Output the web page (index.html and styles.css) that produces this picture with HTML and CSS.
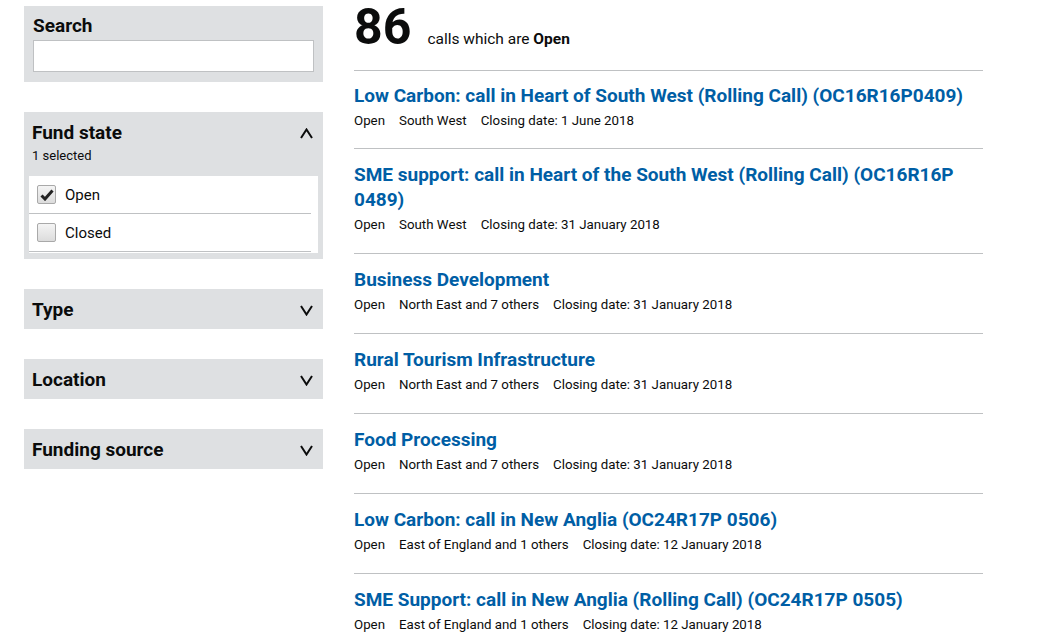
FILE: index.html
```html
<!DOCTYPE html>
<html lang="en">
<head>
  <meta charset="UTF-8" />
  <title>Funding calls</title>
  <link rel="stylesheet" href="styles.css">
</head>
<body>
  <div class="page">
    <aside class="filters">
      <div class="panel search">
        <label for="q" class="panel-title">Search</label>
        <input type="text" id="q" />
      </div>

      <div class="panel facet open">
        <div class="facet-head">
          <div>
            <div class="panel-title">Fund state</div>
            <div class="facet-count">1 selected</div>
          </div>
          <span class="caret">
            <svg width="13" height="11" viewBox="0 0 13 11"><path d="M1 10 L6.5 1.5 L12 10" fill="none" stroke="#0b0c0c" stroke-width="2"/></svg>
          </span>
        </div>
        <div class="options">
          <label class="option">
            <span class="box checked">
              <svg width="14" height="12" viewBox="0 0 14 12"><path d="M1.5 6.5 L5 10 L12.5 1.5" fill="none" stroke="#222" stroke-width="3"/></svg>
            </span>
            Open
          </label>
          <label class="option">
            <span class="box"></span>
            Closed
          </label>
        </div>
      </div>

      <div class="panel facet">
        <div class="facet-head">
          <div class="panel-title">Type</div>
          <span class="caret"><svg width="13" height="11" viewBox="0 0 13 11"><path d="M1 1 L6.5 9.5 L12 1" fill="none" stroke="#0b0c0c" stroke-width="2"/></svg></span>
        </div>
      </div>

      <div class="panel facet">
        <div class="facet-head">
          <div class="panel-title">Location</div>
          <span class="caret"><svg width="13" height="11" viewBox="0 0 13 11"><path d="M1 1 L6.5 9.5 L12 1" fill="none" stroke="#0b0c0c" stroke-width="2"/></svg></span>
        </div>
      </div>

      <div class="panel facet">
        <div class="facet-head">
          <div class="panel-title">Funding source</div>
          <span class="caret"><svg width="13" height="11" viewBox="0 0 13 11"><path d="M1 1 L6.5 9.5 L12 1" fill="none" stroke="#0b0c0c" stroke-width="2"/></svg></span>
        </div>
      </div>
    </aside>

    <main class="results">
      <div class="summary">
        <span class="count">86</span>
        <span class="count-text">calls which are <strong>Open</strong></span>
      </div>

      <ul class="calls">
        <li>
          <a href="#">Low Carbon: call in Heart of South West (Rolling Call) (OC16R16P0409)</a>
          <p class="meta"><span>Open</span><span>South West</span><span>Closing date: 1 June 2018</span></p>
        </li>
        <li>
          <a href="#">SME support: call in Heart of the South West (Rolling Call) (OC16R16P 0489)</a>
          <p class="meta"><span>Open</span><span>South West</span><span>Closing date: 31 January 2018</span></p>
        </li>
        <li>
          <a href="#">Business Development</a>
          <p class="meta"><span>Open</span><span>North East and 7 others</span><span>Closing date: 31 January 2018</span></p>
        </li>
        <li>
          <a href="#">Rural Tourism Infrastructure</a>
          <p class="meta"><span>Open</span><span>North East and 7 others</span><span>Closing date: 31 January 2018</span></p>
        </li>
        <li>
          <a href="#">Food Processing</a>
          <p class="meta"><span>Open</span><span>North East and 7 others</span><span>Closing date: 31 January 2018</span></p>
        </li>
        <li>
          <a href="#">Low Carbon: call in New Anglia (OC24R17P 0506)</a>
          <p class="meta"><span>Open</span><span>East of England and 1 others</span><span>Closing date: 12 January 2018</span></p>
        </li>
        <li>
          <a href="#">SME Support: call in New Anglia (Rolling Call) (OC24R17P 0505)</a>
          <p class="meta"><span>Open</span><span>East of England and 1 others</span><span>Closing date: 12 January 2018</span></p>
        </li>
      </ul>
    </main>
  </div>
</body>
</html>
```

FILE: styles.css
```css
body {
  margin: 0;
  font-family: Roboto, "Liberation Sans", sans-serif;
  color: #0b0c0c;
  background: #fff;
}
.page {
  display: flex;
  align-items: flex-start;
  padding: 6px 0 0 24px;
  gap: 31px;
}
.filters {
  width: 299px;
  flex-shrink: 0;
  display: flex;
  flex-direction: column;
  gap: 30px;
}
.panel {
  background: #dee0e2;
}
.panel-title {
  display: block;
  font-size: 19px;
  font-weight: bold;
  line-height: 24px;
}
.search {
  padding: 8px 9px 10px 9px;
}
.search .panel-title {
  margin-bottom: 2px;
}
.search input {
  display: block;
  box-sizing: border-box;
  width: 281px;
  height: 32px;
  border: 1px solid #bfc1c3;
  margin: 0;
  background: #fff;
}
.facet-head {
  display: flex;
  justify-content: space-between;
  align-items: flex-start;
  padding: 9px 10px 7px 8px;
}
.caret {
  padding-top: 3px;
}
.facet-count {
  font-size: 13px;
  line-height: 18px;
  margin-top: 2px;
}
.open .facet-head {
  padding-bottom: 11px;
}
.options {
  background: #fff;
  margin: 0 5px 6px 5px;
  padding-bottom: 1px;
}
.option {
  display: flex;
  align-items: center;
  gap: 9px;
  height: 37px;
  padding-left: 8px;
  margin-right: 7px;
  border-bottom: 1px solid #bfc1c3;
  font-size: 15px;
}
.box {
  width: 17px;
  height: 17px;
  border: 1px solid #a9a9a9;
  border-radius: 2px;
  background: linear-gradient(#f4f4f4, #dcdcdc);
  display: flex;
  align-items: center;
  justify-content: center;
}
.results {
  width: 629px;
}
.summary {
  display: flex;
  align-items: baseline;
  gap: 16px;
  height: 64px;
  border-bottom: 1px solid #bfc1c3;
}
.count {
  font-size: 50px;
  font-weight: bold;
  line-height: 42px;
}
.count-text {
  font-size: 15.5px;
}
.calls {
  list-style: none;
  margin: 0;
  padding: 0;
}
.calls li {
  padding: 13px 0 18px 0;
  border-bottom: 1px solid #bfc1c3;
}
.calls li:first-child {
  padding: 12px 0 17px 0;
}
.calls a {
  display: block;
  color: #005ea5;
  text-decoration: none;
  font-weight: bold;
  font-size: 19px;
  line-height: 25px;
}
.meta {
  margin: 3px 0 0 0;
  font-size: 13.3px;
  line-height: 20px;
}
.meta span {
  margin-right: 14px;
}
```
